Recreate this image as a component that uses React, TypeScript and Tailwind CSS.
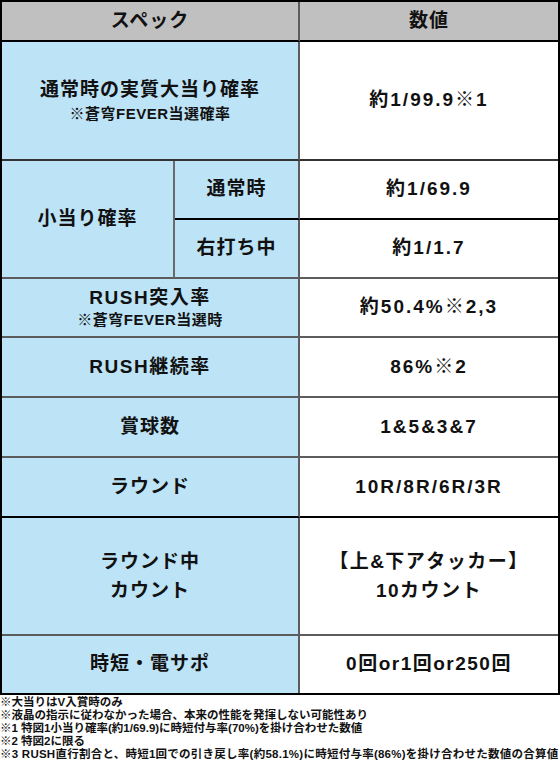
import React from 'react';

const jp = { fontFamily: '"Liberation Sans", "Noto Sans CJK JP", "Noto Sans", sans-serif' };

const BLUE = 'bg-[#bde3f7]';

const App: React.FC = () => {
  return (
    <div className="w-[560px] h-[764px] bg-white text-[#111] font-bold" style={jp}>
      <div className="grid grid-cols-[173px_125px_1fr] grid-rows-[40px_119px_59px_59px_59px_60px_60px_60px_118px_57px] border-2 border-black">
        {/* header */}
        <div className="col-span-2 flex items-center justify-center bg-[#c0c0c0] border-r-2 border-r-[#5c5c5c] border-b-2 border-b-black text-[19px] tracking-[1px]">
          スペック
        </div>
        <div className="flex items-center justify-center bg-[#c0c0c0] border-b-2 border-b-black text-[19px] tracking-[1px]">
          数値
        </div>

        {/* 通常時の実質大当り確率 */}
        <div className={`col-span-2 flex flex-col items-center justify-center ${BLUE} border-r-2 border-r-[#5c5c5c] border-b-2 border-b-[#333]`}>
          <span className="text-[19px] leading-[26px] tracking-[1px]">通常時の実質大当り確率</span>
          <span className="text-[15px] leading-[22px] tracking-[0.5px]">※蒼穹FEVER当選確率</span>
        </div>
        <div className="flex items-center justify-center border-b-2 border-b-[#333] text-[19px] tracking-[2px]">
          約1/99.9※1
        </div>

        {/* 小当り確率 */}
        <div className={`row-span-2 flex items-center justify-center ${BLUE} border-r-2 border-r-[#6a6a6a] border-b-2 border-b-[#5c5c5c] text-[19px] tracking-[1px]`}>
          小当り確率
        </div>
        <div className={`flex items-center justify-center ${BLUE} border-r-2 border-r-[#5c5c5c] border-b-2 border-b-black text-[19px] tracking-[1px]`}>
          通常時
        </div>
        <div className="flex items-center justify-center border-b-2 border-b-black text-[19px] tracking-[2px]">
          約1/69.9
        </div>
        <div className={`flex items-center justify-center ${BLUE} border-r-2 border-r-[#5c5c5c] border-b-2 border-b-[#5c5c5c] text-[19px] tracking-[1px]`}>
          右打ち中
        </div>
        <div className="flex items-center justify-center border-b-2 border-b-[#5c5c5c] text-[19px] tracking-[2px]">
          約1/1.7
        </div>

        {/* RUSH突入率 */}
        <div className={`col-span-2 flex flex-col items-center justify-center ${BLUE} border-r-2 border-r-[#5c5c5c] border-b-2 border-b-[#5c5c5c]`}>
          <span className="text-[19px] leading-[24px] tracking-[1.5px]">RUSH突入率</span>
          <span className="text-[15px] leading-[20px] tracking-[0.5px]">※蒼穹FEVER当選時</span>
        </div>
        <div className="flex items-center justify-center border-b-2 border-b-[#5c5c5c] text-[19px] tracking-[2px]">
          約50.4%※2,3
        </div>

        {/* RUSH継続率 */}
        <div className={`col-span-2 flex items-center justify-center ${BLUE} border-r-2 border-r-[#5c5c5c] border-b-2 border-b-[#5c5c5c] text-[19px] tracking-[1.5px]`}>
          RUSH継続率
        </div>
        <div className="flex items-center justify-center border-b-2 border-b-[#5c5c5c] text-[19px] tracking-[2px]">
          86%※2
        </div>

        {/* 賞球数 */}
        <div className={`col-span-2 flex items-center justify-center ${BLUE} border-r-2 border-r-[#5c5c5c] border-b-2 border-b-[#5c5c5c] text-[19px] tracking-[1px]`}>
          賞球数
        </div>
        <div className="flex items-center justify-center border-b-2 border-b-[#5c5c5c] text-[19px] tracking-[2px]">
          1&amp;5&amp;3&amp;7
        </div>

        {/* ラウンド */}
        <div className={`col-span-2 flex items-center justify-center ${BLUE} border-r-2 border-r-[#5c5c5c] border-b-2 border-b-black text-[19px] tracking-[1px]`}>
          ラウンド
        </div>
        <div className="flex items-center justify-center border-b-2 border-b-black text-[19px] tracking-[2px]">
          10R/8R/6R/3R
        </div>

        {/* ラウンド中カウント */}
        <div className={`col-span-2 flex flex-col items-center justify-center ${BLUE} border-r-2 border-r-[#5c5c5c] border-b-2 border-b-[#5c5c5c] text-[19px] leading-[29px] tracking-[1px]`}>
          <span>ラウンド中</span>
          <span>カウント</span>
        </div>
        <div className="flex flex-col items-center justify-center border-b-2 border-b-[#5c5c5c] text-[19px] leading-[29px] tracking-[1.5px]">
          <span>【上&amp;下アタッカー】</span>
          <span>10カウント</span>
        </div>

        {/* 時短・電サポ */}
        <div className={`col-span-2 flex items-center justify-center ${BLUE} border-r-2 border-r-[#5c5c5c] text-[19px] tracking-[1px]`}>
          時短・電サポ
        </div>
        <div className="flex items-center justify-center text-[19px] tracking-[1.5px]">
          0回or1回or250回
        </div>
      </div>

      <div className="pt-[1px] text-[11.5px] leading-[13px] whitespace-nowrap">
        <p>※大当りはV入賞時のみ</p>
        <p>※液晶の指示に従わなかった場合、本来の性能を発揮しない可能性あり</p>
        <p>※1 特図1小当り確率(約1/69.9)に時短付与率(70%)を掛け合わせた数値</p>
        <p>※2 特図2に限る</p>
        <p className="tracking-[0.25px]">※3 RUSH直行割合と、時短1回での引き戻し率(約58.1%)に時短付与率(86%)を掛け合わせた数値の合算値</p>
      </div>
    </div>
  );
};

export default App;
